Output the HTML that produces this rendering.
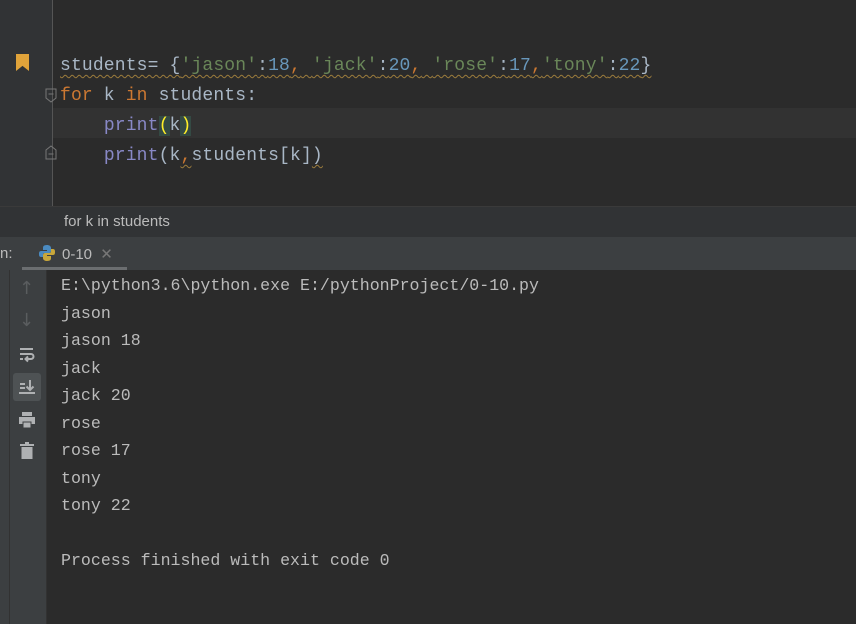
<!DOCTYPE html><html><head><style>
body{margin:0;width:856px;height:624px;background:#2b2b2b;overflow:hidden;position:relative;font-family:"Liberation Mono",monospace}
.a{position:absolute}
.code{font-size:18px;letter-spacing:0.15px;color:#a9b7c6;white-space:pre;line-height:30px}
.kw{color:#cc7832}.s{color:#6a8759}.n{color:#6897bb}.f{color:#8888c6}
.wv{text-decoration:underline wavy #9c7c3c;text-decoration-thickness:1px;text-underline-offset:4px}
.con{font-size:16.6px;color:#bbbbbb;white-space:pre;line-height:27.5px}
</style></head><body>
<div class="a" style="left:0;top:0;width:52px;height:206px;background:#313335"></div>
<div class="a" style="left:52px;top:0;width:1px;height:206px;background:#555"></div>
<div class="a" style="left:53px;top:108px;width:803px;height:30px;background:#323232"></div>
<div class="a" style="left:16px;top:54px;width:13px;height:17px;background:#e0a33a;clip-path:polygon(0 0,100% 0,100% 100%,50% 70%,0 100%)"></div>
<svg class="a" style="left:44px;top:88px" width="16" height="16"><path d="M2 1H12V10L7 14L2 10Z" fill="none" stroke="#777"/><path d="M4.5 6H9.5" stroke="#777"/></svg>
<svg class="a" style="left:44px;top:144px" width="16" height="16"><path d="M2 15H12V6L7 2L2 6Z" fill="none" stroke="#777"/><path d="M4.5 10H9.5" stroke="#777"/></svg>
<div class="a code" style="left:60px;top:51px"><span class="wv">students= {<span class="s">'jason'</span>:<span class="n">18</span><span class="kw">,</span> <span class="s">'jack'</span>:<span class="n">20</span><span class="kw">,</span> <span class="s">'rose'</span>:<span class="n">17</span><span class="kw">,</span><span class="s">'tony'</span>:<span class="n">22</span>}</span>
<span class="kw">for</span> k <span class="kw">in</span> students:
    <span class="f">print</span><span style="background:#344a44;color:#ffef28">(</span>k<span style="background:#344a44;color:#ffef28">)</span>
    <span class="f">print</span>(k<span class="kw wv">,</span>students[k]<span class="wv">)</span></div>
<div class="a" style="left:0;top:206px;width:856px;height:31px;background:#313335;border-top:1px solid #3a3a3a"></div>
<div class="a" style="left:64px;top:213px;font:15px 'Liberation Sans',sans-serif;color:#bbb">for k in students</div>
<div class="a" style="left:0;top:237px;width:856px;height:33px;background:#3c3f41"></div>
<div class="a" style="left:0;top:245px;font:15px 'Liberation Sans',sans-serif;color:#bbb">n:</div>
<svg class="a" style="left:38px;top:244px" width="18" height="18"><path d="M9 1C5 1 5 3 5 4V6H9V7H3C1 7 1 9 1 10S1 13 3 13H5V11C5 9 6 9 8 9H11C12 9 13 8 13 7V4C13 2 11 1 9 1Z" fill="#4a8ac0"/><path d="M9 17C13 17 13 15 13 14V12H9V11H15C17 11 17 9 17 8S17 5 15 5H13V7C13 9 12 9 10 9H7C6 9 5 10 5 11V14C5 16 7 17 9 17Z" fill="#c9a73a"/></svg>
<div class="a" style="left:62px;top:245px;font:15px 'Liberation Sans',sans-serif;color:#bbb">0-10 <span style="color:#777;margin-left:4px">✕</span></div>
<div class="a" style="left:22px;top:267px;width:105px;height:3px;background:#6b6e70"></div>
<div class="a" style="left:0;top:270px;width:9px;height:354px;background:#3c3f41"></div>
<div class="a" style="left:9px;top:270px;width:36px;height:354px;background:#3c3f41;border-left:1px solid #323232;border-right:1px solid #323232"></div>
<div class="a" style="left:13px;top:373px;width:28px;height:28px;background:#4e5254;border-radius:3px"></div>
<div class="a" style="left:19px;top:278px;color:#5a5d5f;font:18px 'DejaVu Sans'">↑</div>
<div class="a" style="left:19px;top:310px;color:#5a5d5f;font:18px 'DejaVu Sans'">↓</div>
<svg class="a" style="left:18px;top:346px" width="18" height="18"><path d="M2 3H15M2 8H13A2.5 2.5 0 0 1 13 13H8M10 10.5L7.5 13L10 15.5M2 13H5" fill="none" stroke="#afb1b3" stroke-width="2"/></svg>
<svg class="a" style="left:18px;top:378px" width="18" height="18"><path d="M2 6H7M2 10H7M1 15H17M12 2V12M8.5 8.5L12 12L15.5 8.5" fill="none" stroke="#afb1b3" stroke-width="2"/></svg>
<svg class="a" style="left:18px;top:411px" width="18" height="18"><rect x="4" y="1" width="10" height="4" fill="#afb1b3"/><rect x="1" y="6" width="16" height="7" fill="#afb1b3"/><rect x="5" y="11" width="8" height="6" fill="#afb1b3" stroke="#3c3f41"/></svg>
<svg class="a" style="left:18px;top:442px" width="18" height="18"><rect x="2" y="2" width="14" height="2" fill="#afb1b3"/><rect x="7" y="0" width="4" height="2" fill="#afb1b3"/><rect x="3.5" y="5" width="11" height="12" fill="#afb1b3"/></svg>
<div class="a con" style="left:61px;top:272px">E:\python3.6\python.exe E:/pythonProject/0-10.py
jason
jason 18
jack
jack 20
rose
rose 17
tony
tony 22

Process finished with exit code 0</div>
</body></html>
